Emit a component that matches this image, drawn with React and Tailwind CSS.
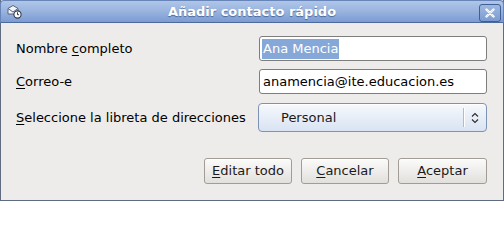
import React from 'react';

const font = { fontFamily: '"DejaVu Sans", Verdana, sans-serif' };

const Btn = ({ first, rest, w }) => (
  <button
    className={`h-[26px] ${w} rounded-[3px] border border-[#a19d96] bg-gradient-to-b from-[#fbfbfa] to-[#e2e0dd] text-[13px] text-[#1a1a1a] shadow-[inset_0_1px_0_#ffffff]`}
  >
    <span className="underline underline-offset-2">{first}</span>
    {rest}
  </button>
);

const TitleIcon = () => (
  <svg width="15" height="15" viewBox="0 0 15 15">
    <path d="M1 4.5 L6 1.5 L11 4.5 L11 10 L1 10 Z" fill="#f3f5f8" stroke="#56657d" strokeWidth="1" />
    <path d="M1 4.5 L6 8 L11 4.5" fill="none" stroke="#56657d" strokeWidth="1" />
    <circle cx="10.5" cy="10.5" r="3.6" fill="#ffffff" stroke="#2f3a4c" strokeWidth="1.1" />
    <path d="M10.5 8.3 L10.5 10.7 L12 10.7" fill="none" stroke="#2f3a4c" strokeWidth="1" />
  </svg>
);

const App = () => {
  return (
    <div className="w-[504px] bg-[#edeceb]" style={font}>
      <div className="flex flex-col border border-t-0 border-[#5f6b7e]">
        {/* barra de título */}
        <div className="relative flex h-[23px] -mx-px items-center justify-center rounded-t-[4px] border border-b-[#4d6a9c] border-[#6785b9] bg-gradient-to-b from-[#b0c6e8] via-[#98b3df] to-[#7c9bd2]">
          <span className="absolute left-[6px] top-[3px]"><TitleIcon /></span>
          <span className="text-[13px] font-bold text-white [text-shadow:0_1px_1px_#4c6796]">Añadir contacto rápido</span>
          <span className="absolute right-[2px] top-[3px] flex h-[18px] w-[22px] items-center justify-center rounded-[3px] border border-[#3f5f95] bg-gradient-to-b from-[#9fb8e1] to-[#7b9bd0]">
            <svg width="10" height="10" viewBox="0 0 10 10">
              <path d="M1.5 1.5 L8.5 8.5 M8.5 1.5 L1.5 8.5" stroke="#ffffff" strokeWidth="2.4" strokeLinecap="round" />
              <path d="M1.5 1.5 L8.5 8.5 M8.5 1.5 L1.5 8.5" stroke="#3f5f95" strokeWidth="0.6" strokeOpacity="0.3" />
            </svg>
          </span>
        </div>

        {/* formulario */}
        <div className="flex flex-col pl-[15px] pr-[16px] pt-[13px] text-[13px] text-black">
          <div className="flex h-[25px] items-center justify-between">
            <span>Nombre <span className="underline underline-offset-2">c</span>ompleto</span>
            <div className="flex h-[25px] w-[228px] items-center rounded-[3px] border border-[#7e7e7c] bg-white px-[2px]">
              <span className="bg-[#86a8d8] px-px leading-[20px] text-white">Ana Mencia</span>
            </div>
          </div>
          <div className="mt-[8px] flex h-[25px] items-center justify-between">
            <span><span className="underline underline-offset-2">C</span>orreo-e</span>
            <div className="flex h-[25px] w-[228px] items-center rounded-[3px] border border-[#7e7e7c] bg-white px-[3px]">
              anamencia@ite.educacion.es
            </div>
          </div>
          <div className="mt-[9px] flex h-[29px] items-center justify-between">
            <span><span className="underline underline-offset-2">S</span>eleccione la libreta de direcciones</span>
            <div className="flex h-[29px] w-[229px] items-center rounded-[4px] border border-[#7d93b6] bg-gradient-to-b from-[#f6f9fd] to-[#d9e3f2] shadow-[inset_0_1px_0_#ffffff]">
              <span className="flex-1 pl-[22px] text-[#1a1a1a]">Personal</span>
              <span className="h-[19px] w-px bg-[#aebbd0] shadow-[1px_0_0_#ffffff]" />
              <span className="flex w-[22px] justify-center">
                <svg width="8" height="12" viewBox="0 0 8 12">
                  <path d="M1 4.5 L4 1.5 L7 4.5 M1 7.5 L4 10.5 L7 7.5" fill="none" stroke="#2a2a2a" strokeWidth="1.1" />
                </svg>
              </span>
            </div>
          </div>
        </div>

        <div className="mt-[26px] flex justify-end gap-[9px] pr-[16px]">
          <Btn first="E" rest="ditar todo" w="w-[88px]" />
          <Btn first="C" rest="ancelar" w="w-[88px]" />
          <Btn first="A" rest="ceptar" w="w-[89px]" />
        </div>
        <div className="h-[16px]" />
      </div>
    </div>
  );
};

export default App;
